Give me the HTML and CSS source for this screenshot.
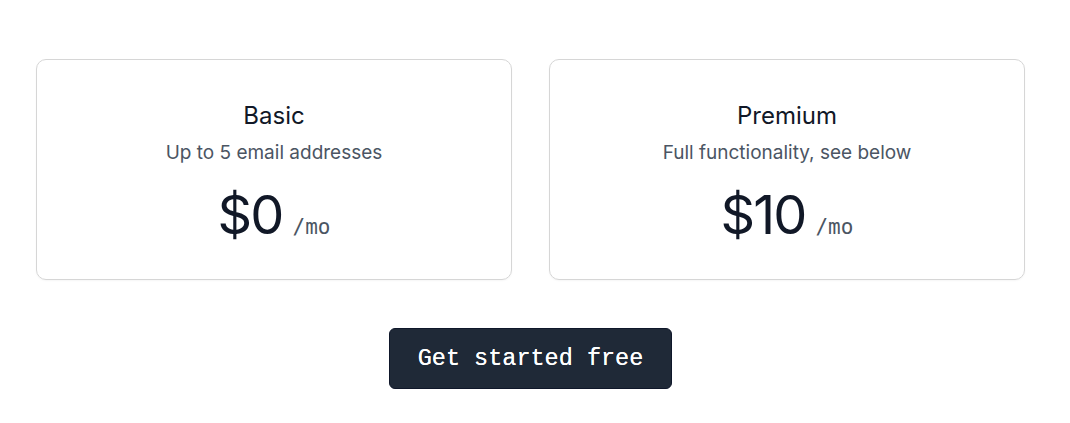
FILE: index.html
```html
<!DOCTYPE html>
<html lang="en">
<head>
    <meta charset="UTF-8">
    <meta name="viewport" content="width=device-width, initial-scale=1.0">
    <title>Pricing</title>
    <link rel="stylesheet" href="styles.css">
</head>
<body>
    <div class="pricing">
        <div class="plans">
            <div class="plan">
                <h2>Basic</h2>
                <p class="desc">Up to 5 email addresses</p>
                <div class="price">$0 <span class="per">/mo</span></div>
            </div>
            <div class="plan">
                <h2>Premium</h2>
                <p class="desc">Full functionality, see below</p>
                <div class="price">$10 <span class="per">/mo</span></div>
            </div>
        </div>
        <div class="cta">
            <a href="#" class="button">Get started free</a>
        </div>
    </div>
</body>
</html>
```

FILE: styles.css
```css
body {
    margin: 0;
    font-family: 'Inter', 'Noto Sans', sans-serif;
    background: #ffffff;
    color: #0f172a;
}
.pricing {
    padding: 59px 45px 0 36px;
}
.plans {
    display: grid;
    grid-template-columns: 1fr 1fr;
    gap: 37px;
}
.plan {
    border: 1px solid #d6d6d6;
    border-radius: 10px;
    padding: 40px 20px 38px;
    text-align: center;
    box-shadow: 0 1px 2px rgba(0, 0, 0, 0.04);
}
.plan h2 {
    margin: 0;
    font-size: 24px;
    line-height: 32px;
    font-weight: 400;
    color: #111827;
}
.desc {
    margin: 7px 0 0;
    font-size: 19px;
    line-height: 28px;
    color: #4b5563;
}
.price {
    margin-top: 22px;
    font-size: 54px;
    line-height: 52px;
    letter-spacing: -2px;
    color: #111827;
}
.per {
    font-family: 'DejaVu Sans Mono', monospace;
    font-size: 21px;
    line-height: 0;
    letter-spacing: 0;
    margin-left: -3px;
    color: #4b5563;
}
.cta {
    display: flex;
    justify-content: center;
    margin-top: 48px;
}
.button {
    display: inline-block;
    background: #1f2937;
    border: 1px solid #0f172a;
    border-radius: 6px;
    color: #ffffff;
    text-decoration: none;
    font-family: 'Liberation Mono', monospace;
    font-size: 23.5px;
    line-height: 27px;
    padding: 16px 28px;
    text-shadow: 0 0 0.6px #ffffff;
}
```
